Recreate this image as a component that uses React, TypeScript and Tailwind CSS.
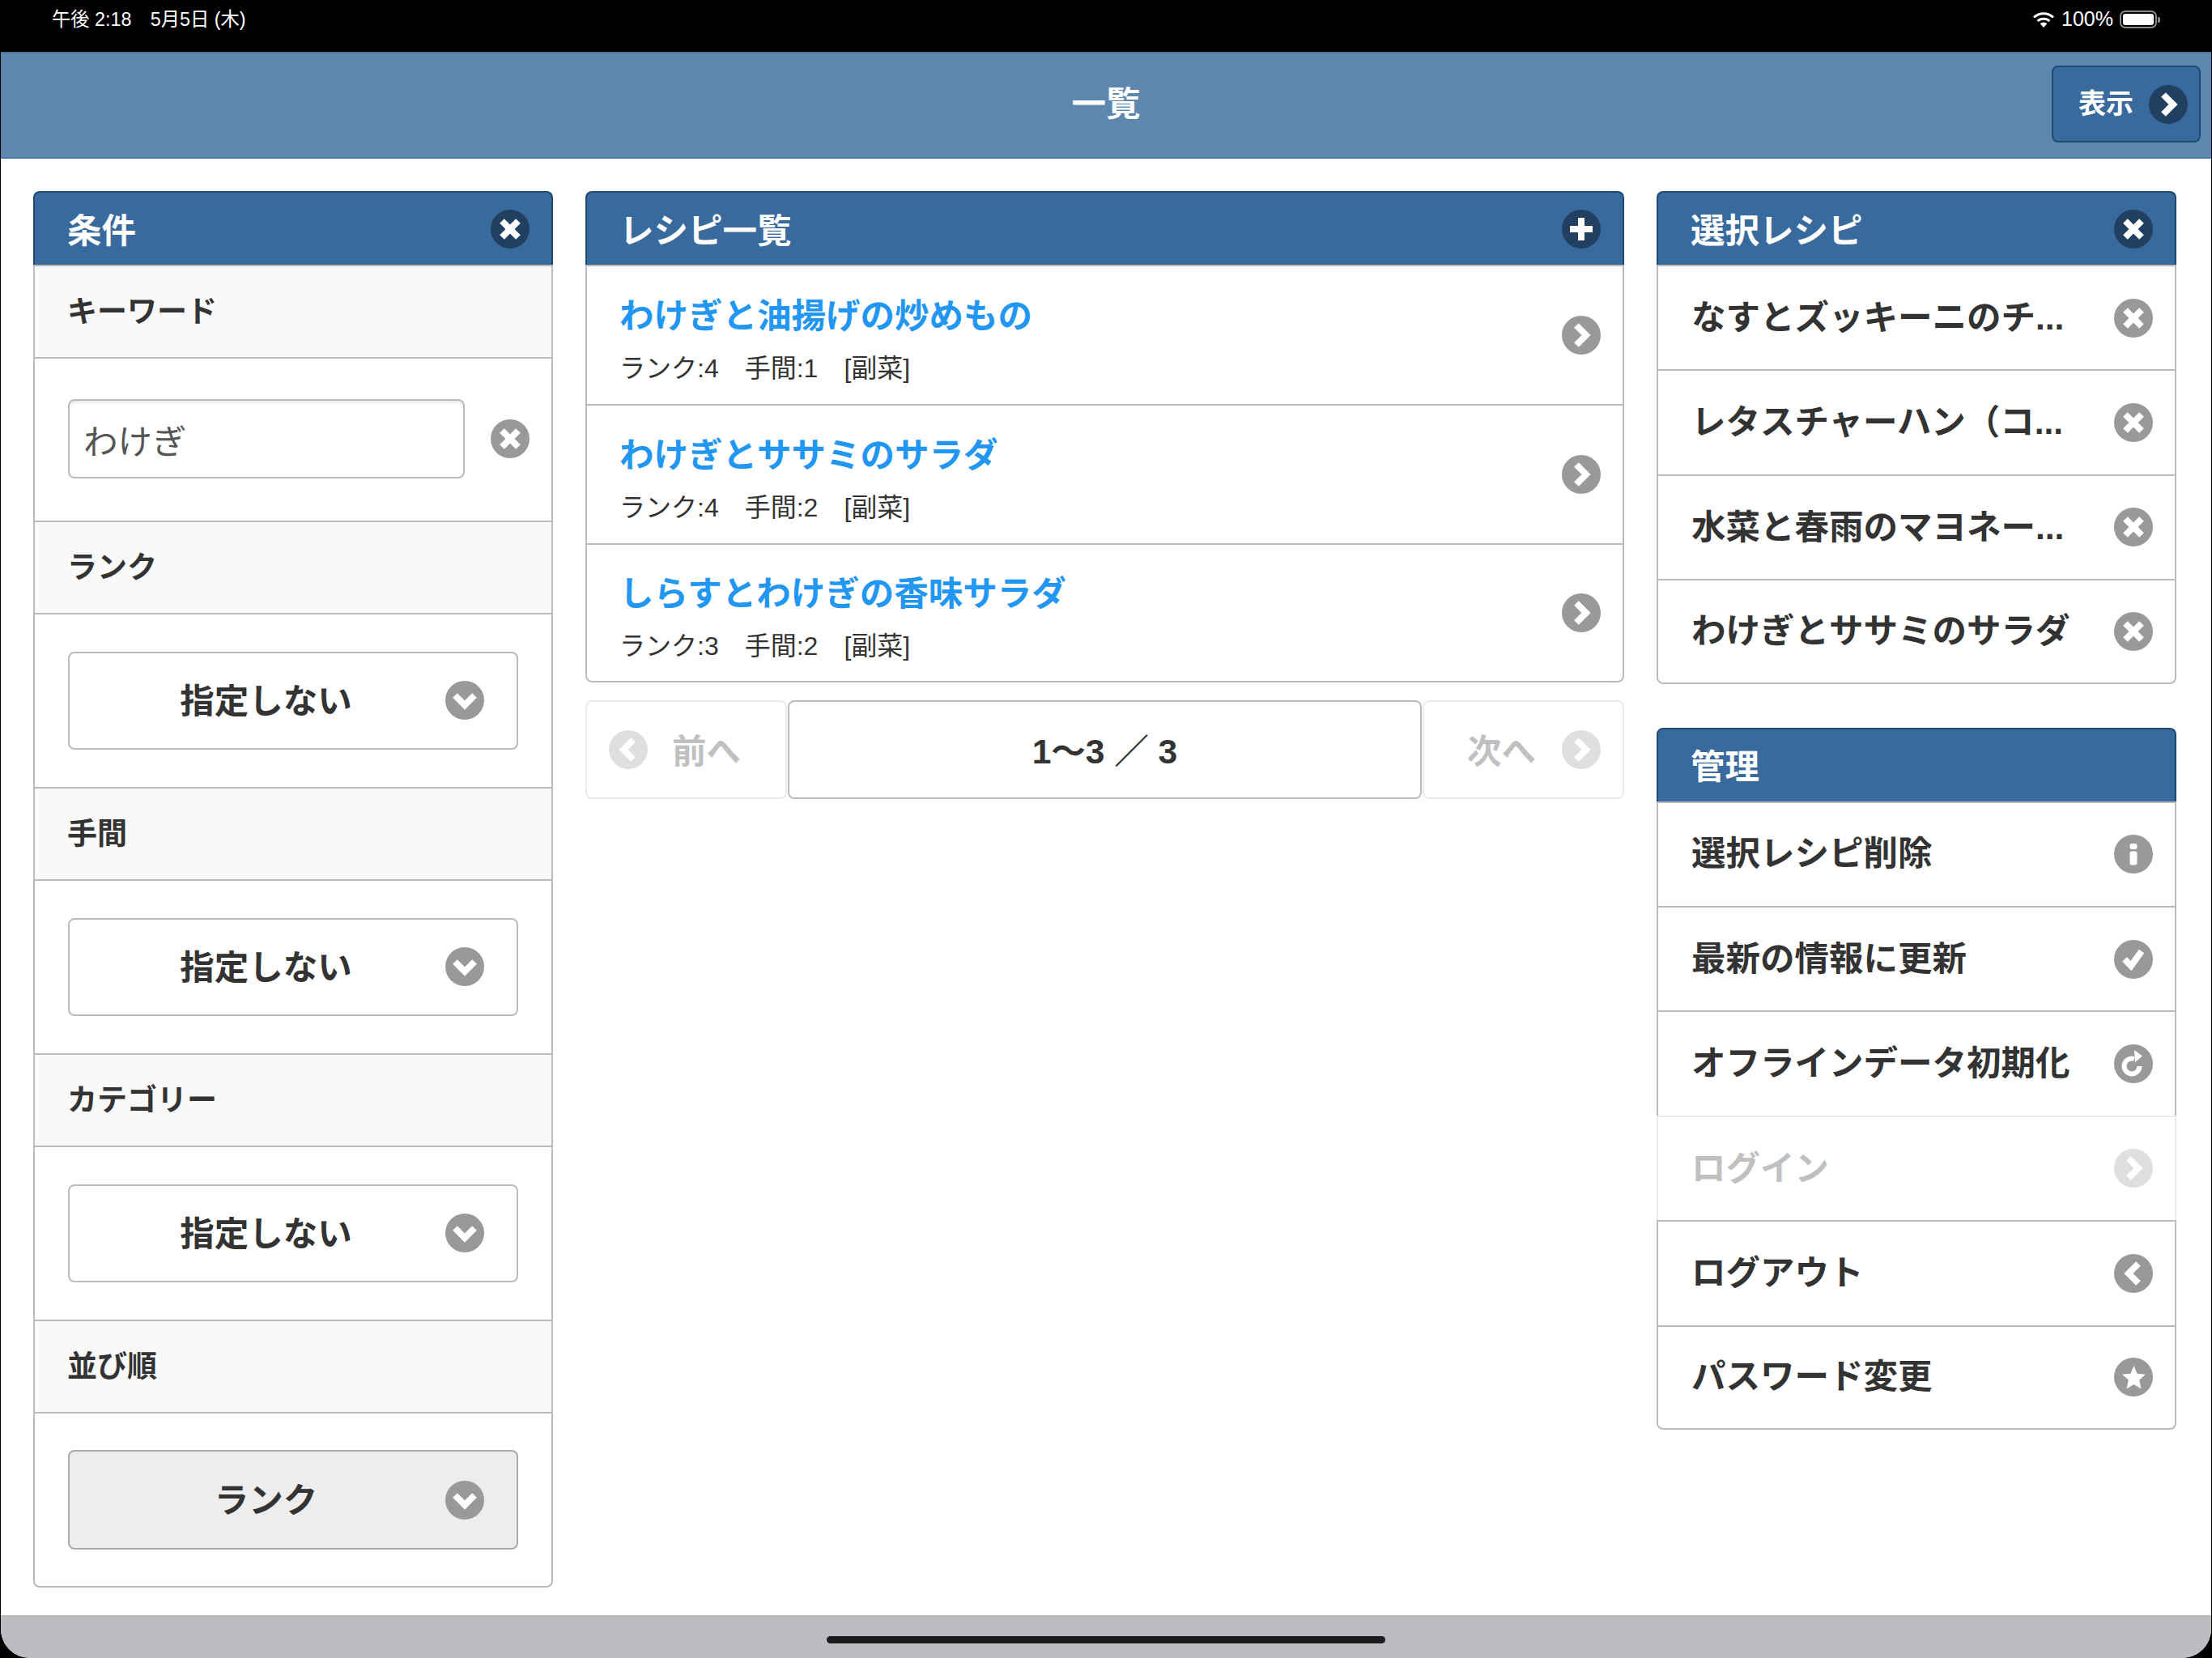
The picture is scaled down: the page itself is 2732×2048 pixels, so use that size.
import type { ReactNode } from 'react';

type IconName = 'x' | 'plus' | 'right' | 'left' | 'down' | 'info' | 'check' | 'refresh' | 'star';

function Glyph({ name }: { name: IconName }) {
  const line = { fill: 'none', stroke: '#fff', strokeWidth: 8 };
  switch (name) {
    case 'x':
      return <path d="M14 14L34 34M34 14L14 34" {...line} />;
    case 'plus':
      return <path d="M24 10V38M10 24H38" {...line} />;
    case 'right':
      return <path d="M18 12L30 24L18 36" {...line} />;
    case 'left':
      return <path d="M30 12L18 24L30 36" {...line} />;
    case 'down':
      return <path d="M12 18L24 30L36 18" {...line} />;
    case 'check':
      return <path d="M13 24L21 32L34 14" {...line} />;
    case 'info':
      return (
        <>
          <rect x="19.5" y="11" width="9" height="7" rx="2.5" fill="#fff" />
          <rect x="19.5" y="20.5" width="9" height="17" rx="2.5" fill="#fff" />
        </>
      );
    case 'refresh':
      return (
        <>
          <path d="M31.5 27A9.5 9.5 0 1 1 25 18" fill="none" stroke="#fff" strokeWidth="6" />
          <path d="M25 7L35 14.5L26 22Z" fill="#fff" />
        </>
      );
    case 'star':
      return <path d="M24.5 10L28.6 19.7L39 20.8L31.2 27.6L33.5 38.5L24.5 33L15.5 38.5L17.8 27.6L10 20.8L20.4 19.7Z" fill="#fff" />;
  }
}

function Icon({ name, dark, className = '' }: { name: IconName; dark?: boolean; className?: string }) {
  return (
    <svg viewBox="0 0 48 48" className={`w-[48px] h-[48px] shrink-0 ${className}`}>
      <circle cx="24" cy="24" r="24" fill={dark ? '#213f60' : '#999999'} />
      <Glyph name={name} />
    </svg>
  );
}

function PanelHeader({ title, icon }: { title: string; icon?: IconName }) {
  return (
    <div className="h-[91px] flex items-center justify-between pl-[40px] pr-[27px] bg-[#396a9e] border-2 border-b-0 border-[#1c4a70] rounded-t-[8px] text-white text-[42.5px] font-semibold">
      <span className="pt-[6px]">{title}</span>
      {icon && <Icon name={icon} dark />}
    </div>
  );
}

function Row({ label, icon, last, disabled }: { label: string; icon: IconName; last?: boolean; disabled?: boolean }) {
  return (
    <div
      className={`h-[129.4px] flex items-center justify-between pl-[41px] pr-[27px] border-x-2 border-t-2 border-[#bbbbbb] text-[42.5px] font-semibold text-[#333333] ${
        last ? 'border-b-2 rounded-b-[8px]' : ''
      } ${disabled ? 'opacity-30' : ''}`}
    >
      <span className="whitespace-nowrap">{label}</span>
      <Icon name={icon} />
    </div>
  );
}

function SectionHead({ children }: { children: ReactNode }) {
  return (
    <div className="h-[114px] flex items-center pl-[40px] pt-[1px] bg-[#f9f9f9] border-x-2 border-t-2 border-[#bbbbbb] text-[37px] font-semibold text-[#333333]">
      {children}
    </div>
  );
}

function SelectBox({ label, active }: { label: string; active?: boolean }) {
  return (
    <div
      className={`w-[556px] flex items-center justify-between rounded-[8px] border-2 pl-[21px] pr-[40px] text-[42.5px] font-semibold text-[#333333] ${
        active ? 'h-[123px] bg-[#ededed] border-[#aaaaaa]' : 'h-[121px] mb-[1px] bg-white border-[#bbbbbb]'
      }`}
    >
      <span className="flex-1 text-center pt-[3px]">{label}</span>
      <Icon name="down" />
    </div>
  );
}

function SelectSection({ title, label, active, last }: { title: string; label: string; active?: boolean; last?: boolean }) {
  return (
    <>
      <SectionHead>{title}</SectionHead>
      <div
        className={`flex items-center pl-[41px] border-x-2 border-t-2 border-[#bbbbbb] ${
          last ? 'border-b-2 rounded-b-[8px] h-[217px]' : 'h-[215px]'
        }`}
      >
        <SelectBox label={label} active={active} />
      </div>
    </>
  );
}

function Recipe({ title, meta, last }: { title: string; meta: string; last?: boolean }) {
  return (
    <div
      className={`h-[172px] flex items-center justify-between pl-[40px] pr-[27px] border-x-2 border-t-2 border-[#bbbbbb] ${
        last ? 'border-b-2 rounded-b-[8px]' : ''
      }`}
    >
      <div className="flex flex-col pt-[11px]">
        <span className="text-[42.5px] leading-[56px] font-semibold text-[#2196f3]">{title}</span>
        <span className="text-[32px] leading-[42px] mt-[15px] text-[#333333] whitespace-pre">{meta}</span>
      </div>
      <Icon name="right" />
    </div>
  );
}

function PagerButton({ label, icon, iconFirst }: { label: string; icon: IconName; iconFirst?: boolean }) {
  return (
    <div className="w-[249px] h-[122px] flex items-center justify-between px-[27px] border-2 border-[#bbbbbb] rounded-[8px] opacity-30 text-[42.5px] font-semibold text-[#333333]">
      {iconFirst && <Icon name={icon} />}
      <span className={`pt-[5px] ${iconFirst ? 'mr-[28px]' : 'ml-[26px]'}`}>{label}</span>
      {!iconFirst && <Icon name={icon} />}
    </div>
  );
}

const selected = ['なすとズッキーニのチ...', 'レタスチャーハン（コ...', '水菜と春雨のマヨネー...', 'わけぎとササミのサラダ'];

export default function App() {
  return (
    <div className="w-[2732px] h-[2048px] bg-black overflow-hidden flex flex-col font-['Liberation_Sans','Noto_Sans_CJK_JP',sans-serif]">
      <div className="h-[64px] shrink-0 flex items-center justify-between pl-[64px] pr-[64px] pb-[16px] text-white text-[23.3px]">
        <span className="whitespace-pre">午後 2:18　5月5日 (木)</span>
        <div className="flex items-center gap-[8px]">
          <svg viewBox="0 0 28 20" className="w-[28px] h-[20px]">
            <path d="M14 20L9.6 15.2A6.5 6.5 0 0 1 18.4 15.2Z" fill="#fff" />
            <path d="M6.6 12A11 11 0 0 1 21.4 12" fill="none" stroke="#fff" strokeWidth="3" />
            <path d="M2 7.4A17.5 17.5 0 0 1 26 7.4" fill="none" stroke="#fff" strokeWidth="3" />
          </svg>
          <span className="text-[25px]">100%</span>
          <div className="flex items-center">
            <div className="w-[46px] h-[22px] rounded-[7px] border-2 border-[#8a8a8a] p-[2px]">
              <div className="w-full h-full rounded-[3px] bg-white" />
            </div>
            <div className="w-[3px] h-[7px] ml-[1px] rounded-r-[2px] bg-[#8a8a8a]" />
          </div>
        </div>
      </div>

      <div className="flex-1 mx-[1px] flex flex-col bg-white rounded-b-[36px] overflow-hidden">
        <div className="h-[132px] shrink-0 flex items-center justify-end pr-[13px] pb-[3px] bg-[#5e87ae] border-y-2 border-[#4a76a0] relative">
          <span className="absolute inset-x-0 text-center text-white text-[42.5px] font-semibold">一覧</span>
          <div className="relative w-[184px] h-[95px] flex items-center justify-between pl-[31px] pr-[14px] rounded-[8px] bg-[#396a9e] border-2 border-[#1c4a70] text-white text-[34px] font-semibold">
            <span>表示</span>
            <Icon name="right" dark />
          </div>
        </div>

        <div className="flex-1 flex gap-[40px] pl-[40px] pt-[40px]">
          <div className="w-[642px]">
            <PanelHeader title="条件" icon="x" />
            <SectionHead>キーワード</SectionHead>
            <div className="h-[202px] flex items-center pl-[41px] pr-[27px] pb-[2px] justify-between border-x-2 border-t-2 border-[#bbbbbb]">
              <input
                readOnly
                value="わけぎ"
                className="w-[490px] h-[98px] px-[17px] bg-white border-2 border-[#bbbbbb] rounded-[8px] text-[42.5px] text-[#555555] font-['Liberation_Sans','Noto_Sans_CJK_JP',sans-serif] shadow-[inset_0_3px_3px_rgba(0,0,0,0.08)] outline-none"
              />
              <Icon name="x" />
            </div>
            <SelectSection title="ランク" label="指定しない" />
            <SelectSection title="手間" label="指定しない" />
            <SelectSection title="カテゴリー" label="指定しない" />
            <SelectSection title="並び順" label="ランク" active last />
          </div>

          <div className="w-[1283px]">
            <PanelHeader title="レシピ一覧" icon="plus" />
            <Recipe title="わけぎと油揚げの炒めもの" meta={'ランク:4　手間:1　[副菜]'} />
            <Recipe title="わけぎとササミのサラダ" meta={'ランク:4　手間:2　[副菜]'} />
            <Recipe title="しらすとわけぎの香味サラダ" meta={'ランク:3　手間:2　[副菜]'} last />
            <div className="flex gap-[1px] mt-[22px]">
              <PagerButton label="前へ" icon="left" iconFirst />
              <div className="flex-1 h-[122px] flex items-center justify-center pt-[5px] border-2 border-[#bbbbbb] rounded-[8px] text-[42.5px] font-semibold text-[#333333] whitespace-pre">
                1〜3 ／ 3
              </div>
              <PagerButton label="次へ" icon="right" />
            </div>
          </div>

          <div className="w-[642px]">
            <PanelHeader title="選択レシピ" icon="x" />
            {selected.map((label, i) => (
              <Row key={label} label={label} icon="x" last={i === selected.length - 1} />
            ))}
            <div className="mt-[54px]">
              <PanelHeader title="管理" />
              <Row label="選択レシピ削除" icon="info" />
              <Row label="最新の情報に更新" icon="check" />
              <Row label="オフラインデータ初期化" icon="refresh" />
              <Row label="ログイン" icon="right" disabled />
              <Row label="ログアウト" icon="left" />
              <Row label="パスワード変更" icon="star" last />
            </div>
          </div>
        </div>

        <div className="h-[53px] shrink-0 flex items-start justify-center pt-[26px] bg-[#bdbcc1]">
          <div className="w-[690px] h-[9px] rounded-full bg-[#1c1c1e]" />
        </div>
      </div>
    </div>
  );
}
